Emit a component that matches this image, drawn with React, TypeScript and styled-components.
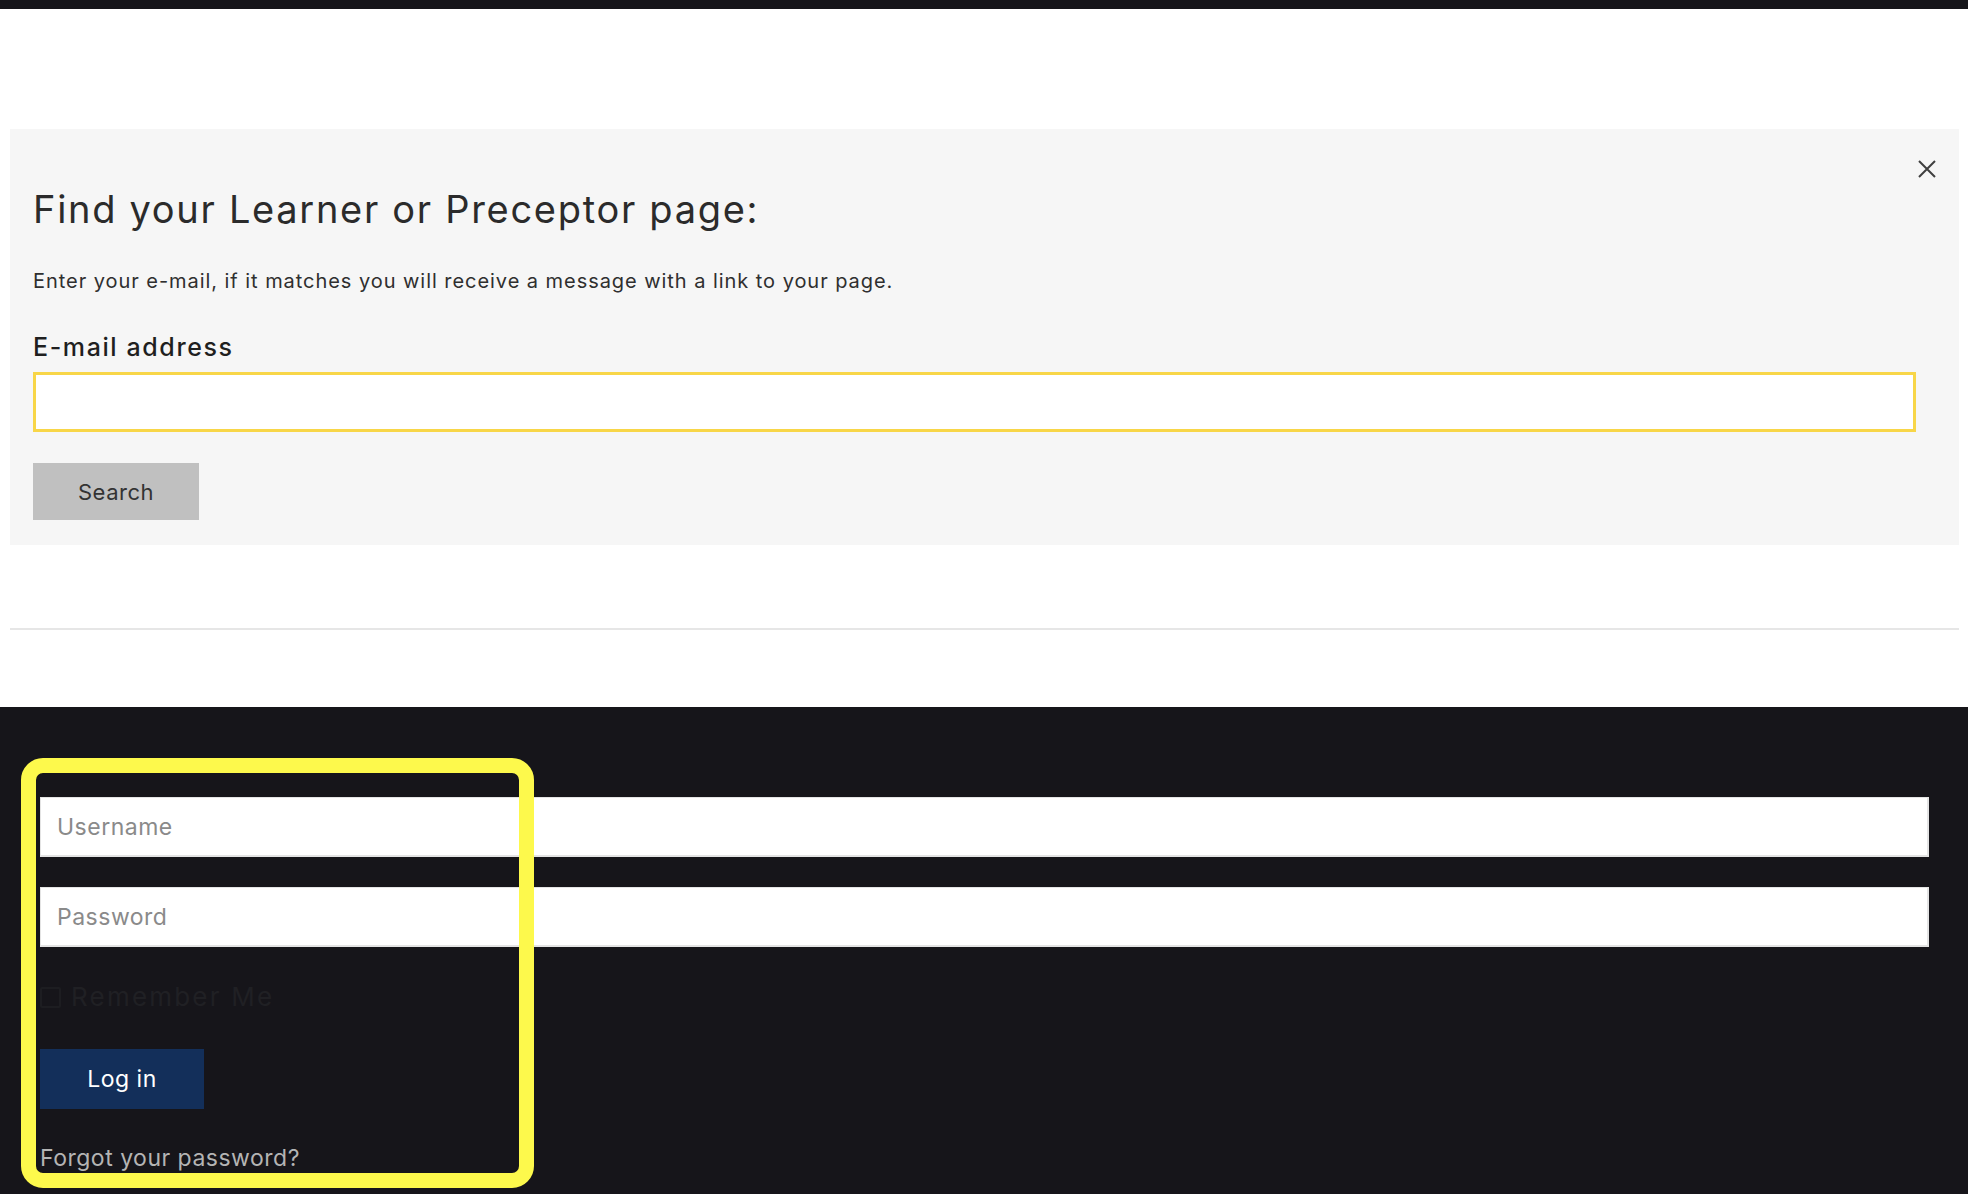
import styled, { createGlobalStyle } from "styled-components";
import { useState } from "react";

const GlobalStyle = createGlobalStyle`
  html, body {
    margin: 0;
    padding: 0;
    background: #ffffff;
    font-family: "Inter", "Open Sans", sans-serif;
  }
  * {
    box-sizing: border-box;
  }
`;

const Page = styled.div`
  display: flex;
  flex-direction: column;
  min-height: 1194px;
  overflow: hidden;
`;

const TopBar = styled.div`
  height: 9px;
  background: #16151a;
`;

const Content = styled.div`
  display: flex;
  flex-direction: column;
  padding: 120px 9px 0 10px;
`;

const FinderPanel = styled.section`
  position: relative;
  background: #f6f6f6;
  padding: 58px 43px 25px 23px;
`;

const CloseButton = styled.button`
  position: absolute;
  top: 29px;
  right: 21px;
  width: 22px;
  height: 22px;
  padding: 0;
  border: none;
  background: transparent;
  cursor: pointer;
  display: flex;
  align-items: center;
  justify-content: center;
`;

const Heading = styled.h2`
  margin: 0;
  font-size: 38px;
  font-weight: 400;
  color: #2b2b2b;
  letter-spacing: 1.7px;
  line-height: 44px;
`;

const Intro = styled.p`
  margin: 37px 0 0;
  font-size: 20px;
  color: #2f2f2f;
  letter-spacing: 0.95px;
  line-height: 26px;
`;

const FieldLabel = styled.label`
  display: block;
  margin-top: 38px;
  font-size: 25px;
  font-weight: 500;
  color: #1f1f1f;
  letter-spacing: 1.6px;
  line-height: 30px;
`;

const EmailInput = styled.input`
  display: block;
  width: 100%;
  height: 60px;
  margin-top: 10px;
  border: 3px solid #f8d648;
  background: #ffffff;
  outline: none;
  font-family: inherit;
  font-size: 20px;
  padding: 0 16px;
`;

const SearchButton = styled.button`
  margin-top: 31px;
  width: 166px;
  height: 57px;
  border: none;
  background: #c0c0c0;
  color: #333333;
  font-family: inherit;
  font-size: 22px;
  letter-spacing: 0.5px;
  cursor: pointer;
`;

const Divider = styled.hr`
  margin: 83px 0 0;
  border: none;
  height: 2px;
  background: #e6e6e6;
`;

const Footer = styled.footer`
  position: relative;
  margin-top: 77px;
  flex: 1;
  background: #16151a;
  padding: 90px 39px 0 40px;
  display: flex;
  flex-direction: column;
`;

const LoginInput = styled.input`
  display: block;
  width: 100%;
  height: 60px;
  margin-bottom: 30px;
  border: 1px solid #e4e4e4;
  border-right-width: 2px;
  border-bottom-width: 2px;
  background: #ffffff;
  outline: none;
  padding: 0 16px;
  font-family: inherit;
  font-size: 23px;
  letter-spacing: 0.5px;
  color: #333;

  &::placeholder {
    color: #8a8a8a;
  }
`;

const RememberRow = styled.label`
  display: flex;
  align-items: center;
  gap: 10px;
  margin-top: 5px;
  font-size: 26px;
  color: #202024;
  letter-spacing: 2.2px;
  line-height: 30px;
`;

const CheckBox = styled.span`
  width: 21px;
  height: 21px;
  border: 2px solid #1d1d21;
  border-radius: 2px;
`;

const LoginButton = styled.button`
  align-self: flex-start;
  margin-top: 37px;
  width: 164px;
  height: 60px;
  border: none;
  background: #132f5a;
  color: #ffffff;
  font-family: inherit;
  font-size: 23px;
  letter-spacing: 0.5px;
  cursor: pointer;
`;

const ForgotLink = styled.a`
  margin-top: 34px;
  font-size: 23px;
  color: #b4b4b4;
  letter-spacing: 0.5px;
  line-height: 30px;
  text-decoration: none;
`;

const Highlight = styled.div`
  position: absolute;
  left: 21px;
  top: 51px;
  width: 513px;
  height: 430px;
  border: 15px solid #fdf94c;
  border-radius: 22px;
  pointer-events: none;
`;

export default function App() {
  const [email, setEmail] = useState("");
  const [userName, setUserName] = useState("");
  const [password, setPassword] = useState("");

  return (
    <Page>
      <GlobalStyle />
      <TopBar />
      <Content>
        <FinderPanel>
          <CloseButton aria-label="Close">
            <svg width="20" height="20" viewBox="0 0 20 20">
              <path
                d="M2 2 L18 18 M18 2 L2 18"
                stroke="#3f3f3f"
                strokeWidth="2"
                fill="none"
              />
            </svg>
          </CloseButton>
          <Heading>Find your Learner or Preceptor page:</Heading>
          <Intro>
            Enter your e-mail, if it matches you will receive a message with a
            link to your page.
          </Intro>
          <FieldLabel htmlFor="finder-email">E-mail address</FieldLabel>
          <EmailInput
            id="finder-email"
            type="email"
            value={email}
            onChange={(e) => setEmail(e.target.value)}
          />
          <SearchButton>Search</SearchButton>
        </FinderPanel>
        <Divider />
      </Content>
      <Footer>
        <LoginInput
          type="text"
          placeholder="Username"
          value={userName}
          onChange={(e) => setUserName(e.target.value)}
        />
        <LoginInput
          type="password"
          placeholder="Password"
          value={password}
          onChange={(e) => setPassword(e.target.value)}
        />
        <RememberRow>
          <CheckBox />
          Remember Me
        </RememberRow>
        <LoginButton>Log in</LoginButton>
        <ForgotLink href="#">Forgot your password?</ForgotLink>
        <Highlight />
      </Footer>
    </Page>
  );
}
